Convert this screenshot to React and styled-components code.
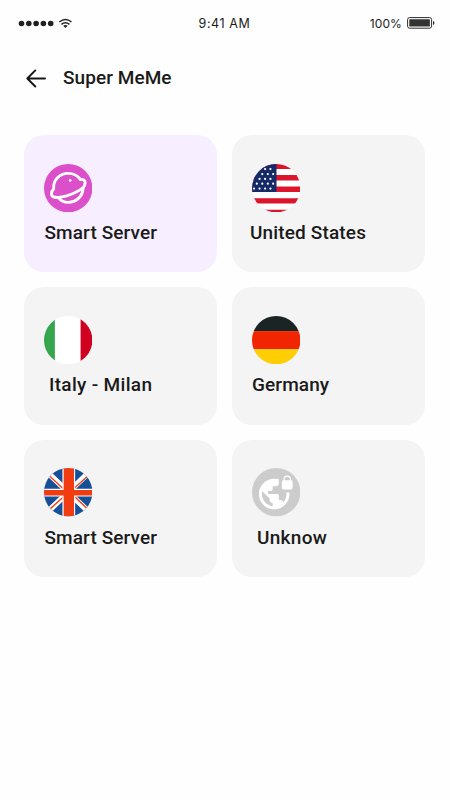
import React from "react";
import styled, { createGlobalStyle } from "styled-components";
import { MdVpnLock } from "react-icons/md";

const GlobalStyle = createGlobalStyle`
  * { box-sizing: border-box; }
  body { margin: 0; background: #fefefe; }
`;

const Screen = styled.main`
  width: 450px;
  height: 800px;
  overflow: hidden;
  background: #fefefe;
  color: #1a1a1a;
  font-family: Roboto, sans-serif;
`;

const StatusBar = styled.div`
  display: grid;
  grid-template-columns: 1fr auto 1fr;
  align-items: center;
  height: 46px;
  padding: 0 15px 0 18px;
  font-family: Inter, sans-serif;
  font-size: 12.5px;
  line-height: 16px;
  color: #1c1c1c;
`;

const Signal = styled.svg`
  display: block;
  width: 56px;
  height: 14px;
`;

const Clock = styled.span`
  margin: 2px 4px 0 0;
  font-size: 12.5px;
  letter-spacing: 0.6px;
`;

const Power = styled.div`
  display: flex;
  justify-content: flex-end;
  align-items: center;
  gap: 5px;
`;

const Charge = styled.span`
  margin-top: 1px;
  font-size: 12px;
  letter-spacing: 0.1px;
`;

const Battery = styled.svg`
  display: block;
  width: 28px;
  height: 12px;
`;

const Header = styled.header`
  display: flex;
  align-items: center;
  height: 64px;
  padding: 0 26px;
  gap: 17px;
`;

const BackButton = styled.button`
  display: flex;
  width: 20px;
  height: 20px;
  padding: 0;
  border: 0;
  background: none;
  color: #161616;
`;

const Title = styled.h1`
  margin: 0;
  font-size: 19px;
  font-weight: 500;
  line-height: 24px;
  letter-spacing: 0.06px;
`;

const Grid = styled.section`
  display: grid;
  grid-template-columns: 193px 193px;
  grid-auto-rows: 137.4px;
  gap: 15px;
  padding: 25px 24px 0;
`;

const Card = styled.article`
  padding: 28.6px 20px 0;
  border-radius: 20px;
  background: ${(p) => (p.$active ? "#f7efff" : "#f4f4f4")};
`;

const Badge = styled.svg`
  display: block;
  width: 48.4px;
  height: 48.4px;
`;

const Label = styled.div`
  margin-top: 9px;
  padding-left: ${(p) => p.$indent || 0}px;
  font-size: 19px;
  font-weight: 500;
  line-height: 24px;
  letter-spacing: ${(p) => p.$tracking ?? 0.1}px;
  white-space: nowrap;
  text-indent: ${(p) => p.$shift || 0}px;
`;

function Round({ id, children }) {
  return (
    <Badge viewBox="0 0 48 48" aria-hidden="true">
      <defs>
        <clipPath id={id}><circle cx="24" cy="24" r="24" /></clipPath>
      </defs>
      <g clipPath={`url(#${id})`}>{children}</g>
    </Badge>
  );
}

const Planet = () => (
  <Round id="planet">
    <rect width="48" height="48" fill="#dc4fcb" />
    <g fill="none" stroke="#fff" strokeWidth="2.9" strokeLinecap="round" strokeLinejoin="round">
      <path d="M9.6 24.6C8.8 16 15.500 9.300 24 9.300c5 0 9.400 2.300 12 6 2.900-.3 5 .8 4.800 3.100-.1 1.600-.7 3.500-1.600 4.600-2.200 2.200-5.200 4-9.200 5.800-6.500 2.900-12.500 4.100-16 4.300-3.500.3-6.600-.5-6.600-3.300 0-1.800.8-3.700 2.200-5.200Z" />
      <path d="M14.200 33.400c2.500 3.100 5.800 4.700 9.800 4.700 8 0 14.200-6 14.700-13.500" />
    </g>
    <circle cx="26" cy="16.3" r="1.3" fill="#fff" />
  </Round>
);

const STARS = [
  [5, [13, 18.3]],
  [10, [10.2, 15.7, 21]],
  [14.8, [7.5, 13, 18.3]],
  [19.5, [4.8, 10.2, 15.7, 21]],
  [24.4, [2, 7.5, 13, 18.3]],
];

const UnitedStates = () => (
  <Round id="us">
    <rect width="48" height="48" fill="#fff" />
    <path fill="#dc152d" d="M0 0h48v5H0zM0 11h48v5.300H0zM0 22.300h48v5.500H0zM0 34h48v5.300H0zM0 45.300h48v3H0z" />
    <rect width="24.3" height="27.8" fill="#172a68" />
    {STARS.map(([y, xs]) => xs.map((x) => <circle key={`${x}-${y}`} cx={x} cy={y} r="1.1" fill="#fff" />))}
  </Round>
);

const Italy = () => (
  <Round id="it">
    <rect width="48" height="48" fill="#fff" />
    <rect width="10.8" height="48" fill="#36a64e" />
    <rect x="36.3" width="12" height="48" fill="#d00021" />
  </Round>
);

const Germany = () => (
  <Round id="de">
    <rect width="48" height="15" fill="#1b2424" />
    <rect y="15" width="48" height="18" fill="#f12500" />
    <rect y="33" width="48" height="15" fill="#ffce04" />
  </Round>
);

const UnitedKingdom = () => (
  <Round id="uk">
    <rect width="48" height="48" fill="#155098" />
    <path d="M2 3l44 42M46 3L2 45" stroke="#fff" strokeWidth="5.6" />
    <path d="M5 7.500l14 13M44.500 7L30 20M4.500 42L20 28M30 28l14.500 14" stroke="#f03c10" strokeWidth="1.3" />
    <path fill="#fff" d="M18.300 0h12.600v48H18.300zM0 20.500h48v7.800H0z" />
    <path d="M19.500 0h10.300v48H19.500zM0 21.700h48v5.500H0z" fill="#f03c10" />
  </Round>
);

const Unknown = () => (
  <Round id="unknown">
    <rect width="48" height="48" fill="#ccc" />
    <MdVpnLock x="5.3" y="6" size="36.5" color="#fff" />
  </Round>
);

const SERVERS = [
  { name: "Smart Server", Icon: Planet, active: true, indent: 0.5 },
  { name: "United States", Icon: UnitedStates, shift: -2, tracking: 0.15 },
  { name: "Italy - Milan", Icon: Italy, indent: 5, tracking: 0.32 },
  { name: "Germany", Icon: Germany },
  { name: "Smart Server", Icon: UnitedKingdom, indent: 0.5 },
  { name: "Unknow", Icon: Unknown, indent: 5, tracking: 0.3 },
];

export default function App() {
  return (
    <Screen>
      <GlobalStyle />
      <StatusBar>
        <Signal viewBox="0 0 56 14" fill="#202020" aria-hidden="true">
          {[3.5, 10.8, 18.1, 25.4, 32.7].map((x) => <circle key={x} cx={x} cy="7.5" r="2.8" />)}
          <g fill="none" stroke="#202020" strokeWidth="1.4">
            <path d="M41.300 6.100q6.100-5.400 12.200 0M43.400 8.400q4-3.300 8 0" />
          </g>
          <path d="M45.200 9.700q2.200-1.600 4.400 0l-2.200 2.200z" />
        </Signal>
        <Clock>9:41 AM</Clock>
        <Power>
          <Charge>100%</Charge>
          <Battery viewBox="0 0 28 12" aria-hidden="true">
            <rect x=".6" y=".6" width="24" height="10.6" rx="2" fill="none" stroke="#2c2c2c" strokeWidth="1" />
            <rect x="2.3" y="2.3" width="20.6" height="7.2" rx=".6" fill="#333" />
            <path d="M26 4q1.500.4 1.500 2T26 8z" fill="#333" />
          </Battery>
        </Power>
      </StatusBar>
      <Header>
        <BackButton aria-label="Back">
          <svg width="20" height="20" viewBox="0 0 20 20" fill="none" stroke="currentColor" strokeWidth="1.9" strokeLinecap="round" strokeLinejoin="round">
            <path d="M19 10.500H1.300M9.300 2.400l-8 8.100 8 8" />
          </svg>
        </BackButton>
        <Title>Super MeMe</Title>
      </Header>
      <Grid>
        {SERVERS.map(({ name, Icon, active, indent, shift, tracking }, i) => (
          <Card key={i} $active={active}>
            <Icon />
            <Label $indent={indent} $shift={shift} $tracking={tracking}>{name}</Label>
          </Card>
        ))}
      </Grid>
    </Screen>
  );
}
